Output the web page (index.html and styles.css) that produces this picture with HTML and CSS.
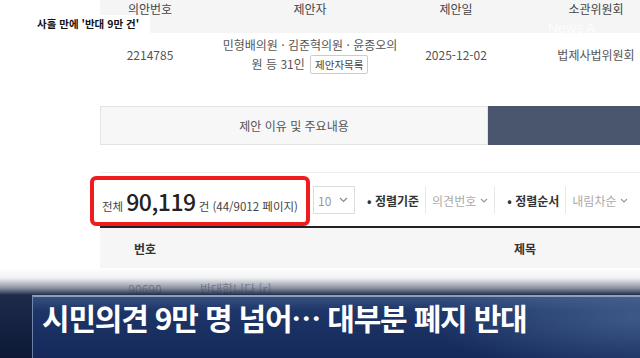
FILE: index.html
```html
<!DOCTYPE html>
<html lang="ko">
<head>
  <meta charset="UTF-8" />
  <meta name="viewport" content="width=device-width, initial-scale=1.0" />
  <title>시민의견 9만 명 넘어</title>
  <link rel="stylesheet" href="styles.css">
</head>
<body>
  <div class="page">
    <div class="bill">
      <div class="bill-head">
        <div>의안번호</div>
        <div>제안자</div>
        <div>제안일</div>
        <div>소관위원회</div>
      </div>
      <div class="bill-row">
        <div>2214785</div>
        <div class="proposer">민형배의원 · 김준혁의원 · 윤종오의<br>원 등 31인 <span class="btn-list">제안자목록</span></div>
        <div>2025-12-02</div>
        <div>법제사법위원회</div>
      </div>
    </div>

    <div class="tabs">
      <div class="tab">제안 이유 및 주요내용</div>
      <div class="tab active"></div>
    </div>

    <div class="list-bar">
      <div class="total">
        <span class="small">전체</span>
        <span class="count">90,119</span>
        <span class="small">건 (44/9012 페이지)</span>
      </div>
      <div class="select num">10 <svg class="caret" width="9" height="6" viewBox="0 0 9 6"><path d="M1 1l3.5 3.5L8 1" fill="none" stroke="#888" stroke-width="1.2"/></svg></div>
      <div class="label">• 정렬기준</div>
      <div class="select soft">의견번호 <svg class="caret" width="8" height="5" viewBox="0 0 8 5"><path d="M1 1l3 3 3-3" fill="none" stroke="#999" stroke-width="1.2"/></svg></div>
      <div class="label">• 정렬순서</div>
      <div class="select soft last">내림차순 <svg class="caret" width="8" height="5" viewBox="0 0 8 5"><path d="M1 1l3 3 3-3" fill="none" stroke="#999" stroke-width="1.2"/></svg></div>
    </div>

    <div class="list">
      <div class="list-head">
        <div>번호</div>
        <div>제목</div>
      </div>
      <div class="list-row">
        <div>90690</div>
        <div>반대합니다 [r]</div>
      </div>
    </div>
  </div>

  <div class="tag">사흘 만에 '반대 9만 건'</div>
  <div class="logo">News A</div>
  <div class="fade"></div>
  <div class="caption">시민의견 9만 명 넘어… 대부분 폐지 반대</div>
</body>
</html>
```

FILE: styles.css
```css
* { margin: 0; padding: 0; box-sizing: border-box; }
html, body {
  width: 640px;
  height: 358px;
  overflow: hidden;
}
body {
  font-family: "Noto Sans CJK KR", "Noto Sans", sans-serif;
  background: #fff;
  color: #555;
  position: relative;
}
.page {
  padding-left: 100px;
  width: 800px;
}

/* bill info table */
.bill-head, .bill-row {
  display: grid;
  grid-template-columns: 100px 220px 72px 208px;
  text-align: center;
  align-items: center;
  font-size: 12px;
}
.bill-head {
  height: 33px;
  background: #f5f5f5;
  color: #444;
  align-items: start;
  line-height: 18px;
}
.bill-row {
  height: 40px;
  margin-top: 1px;
}
.proposer {
  line-height: 19px;
}
.btn-list {
  display: inline-block;
  font-size: 10.5px;
  line-height: 17px;
  padding: 0 4px;
  border: 1px solid #ccc;
  border-radius: 2px;
  background: #fff;
  color: #444;
  margin-left: 2px;
}

/* tabs */
.tabs {
  display: flex;
  margin-top: 32px;
  height: 39px;
}
.tab {
  width: 388px;
  background: #f7f7f7;
  border: 1px solid #e3e3e3;
  display: flex;
  align-items: center;
  justify-content: center;
  font-size: 12px;
  color: #555;
}
.tab.active {
  flex: 1;
  background: #4a566d;
  border-color: #4a566d;
}

/* list controls */
.list-bar {
  display: flex;
  align-items: center;
  margin-top: 27px;
  border-top: 1px solid #efefef;
  height: 55px;
  font-size: 12px;
}
.total {
  margin-left: -10px;
  width: 220px;
  height: 50px;
  margin-top: 1px;
  border: 4px solid #ee1c1c;
  border-radius: 6px;
  display: flex;
  align-items: baseline;
  justify-content: center;
  gap: 3px;
  padding-top: 10px;
  color: #444;
}
.total .small { font-size: 11.5px; }
.count {
  font-size: 23px;
  font-weight: 500;
  color: #222;
  letter-spacing: -0.5px;
  line-height: 1;
}
.select {
  height: 28px;
  display: flex;
  align-items: center;
  gap: 8px;
  font-size: 12px;
  color: #999;
}
.select.num {
  margin-left: 3px;
  width: 42px;
  border: 1px solid #ddd;
  padding-left: 4px;
}
.select.soft {
  border-left: 1px solid #e8e8e8;
  border-right: 1px solid #e8e8e8;
  padding: 0 6px;
  gap: 4px;
  color: #aaa;
}
.select.last { border-right: none; }
.caret {
  flex: none;
}
.label {
  font-weight: 700;
  color: #333;
  margin: 0 6px 0 12px;
}

/* list table */
.list {
  border-top: 2px solid #222;
  margin-top: -1px;
}
.list-head, .list-row {
  display: grid;
  grid-template-columns: 90px 670px;
  text-align: center;
  font-size: 12px;
}
.list-head {
  height: 40px;
  align-items: center;
  background: #f6f6f6;
  font-weight: 700;
  color: #333;
}
.list-row {
  height: 40px;
  align-items: center;
  color: #222;
}
.list-row div:last-child {
  text-align: left;
  padding-left: 10px;
}

/* broadcast overlays */
.tag {
  position: absolute;
  left: 0;
  top: 15px;
  width: 150px;
  height: 18px;
  background: #fff;
  padding-left: 37px;
  font-size: 10.5px;
  font-weight: 700;
  line-height: 18px;
  color: #111;
}
.logo {
  position: absolute;
  left: 548px;
  top: 20px;
  font-family: "Liberation Sans", sans-serif;
  font-size: 14px;
  color: rgba(255, 255, 255, 0.75);
}
.fade {
  position: absolute;
  left: 0;
  top: 268px;
  width: 640px;
  height: 90px;
  background: linear-gradient(to bottom,
    rgba(255, 255, 255, 0) 0,
    rgba(225, 227, 232, 0.5) 10px,
    rgba(120, 128, 146, 0.85) 20px,
    #1e2b4a 27px,
    #0c1836 100%);
}
.caption {
  position: absolute;
  left: 32px;
  top: 295px;
  right: 0;
  bottom: 0;
  padding-left: 9px;
  border-top: 2px solid rgba(170, 186, 214, 0.8);
  border-left: 1px solid rgba(150, 168, 200, 0.6);
  background:
    radial-gradient(ellipse 220px 60px at 610px 20px, rgba(90, 120, 165, 0.55), rgba(90, 120, 165, 0) 100%),
    linear-gradient(to bottom, #35507f 0, #1d3567 14px, #14295a 100%);
  color: #fff;
  font-size: 30px;
  font-weight: 700;
  line-height: 40px;
  letter-spacing: -1.2px;
  white-space: nowrap;
}
```
